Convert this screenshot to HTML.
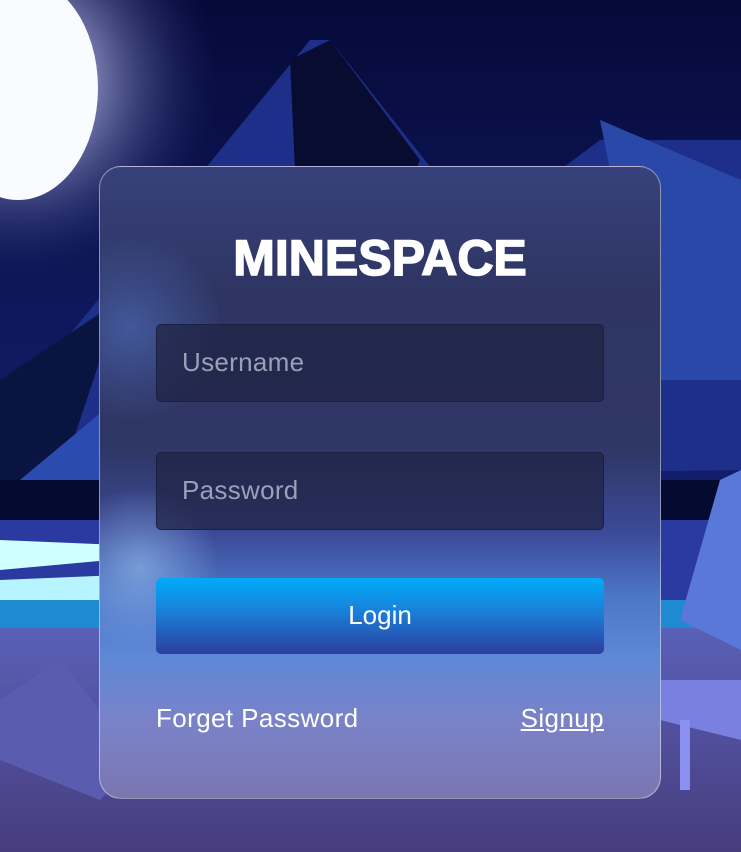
<!DOCTYPE html>
<html><head><meta charset="utf-8"><style>
html,body{margin:0;padding:0;width:741px;height:852px;overflow:hidden;font-family:"Liberation Sans",sans-serif}
#bg{position:absolute;left:0;top:0}
.card{position:absolute;left:99px;top:166px;width:560px;height:631px;border-radius:22px;border:1px solid rgba(255,255,255,0.45);
background:linear-gradient(180deg,#37417b 0%,#2e3563 20%,#2f3766 45%,#3c4a98 58%,#4d76c8 68%,#5f88d6 78%,#7a82c8 88%,#7a76b0 100%);overflow:hidden}
.glow{position:absolute;left:-40px;top:320px;width:160px;height:160px;border-radius:50%;background:radial-gradient(circle,rgba(140,180,230,0.7),rgba(140,180,230,0) 70%)}
.glow2{position:absolute;left:-60px;top:60px;width:180px;height:200px;border-radius:50%;background:radial-gradient(circle,rgba(80,110,190,0.6),rgba(80,110,190,0) 70%)}
h1{position:absolute;left:0;width:560px;top:62px;margin:0;text-align:center;color:#fff;font-size:50px;font-weight:900;-webkit-text-stroke:1.5px #fff}
.inp{position:absolute;left:56px;width:448px;height:78px;border-radius:5px;border:1px solid #1c2040;background:rgba(30,34,66,0.7);color:#9aa0b8;font-size:26px;letter-spacing:0.3px;line-height:74px;padding-left:25px;box-sizing:border-box}
.btn{position:absolute;left:56px;top:411px;width:448px;height:76px;border-radius:5px;background:linear-gradient(180deg,#00acfa 0%,#1a7fd8 45%,#2d3ea0 100%);color:#fff;font-size:26px;text-align:center;line-height:74px}
.lk{position:absolute;top:536px;color:#fff;font-size:26px;letter-spacing:0.4px}
</style></head><body>
<svg id="bg" width="741" height="852" viewBox="0 0 741 852">
<defs>
<linearGradient id="sky" x1="0" y1="0" x2="0" y2="1"><stop offset="0" stop-color="#060a3a"/><stop offset="0.6" stop-color="#14206e"/></linearGradient>
<radialGradient id="moonglow" cx="20" cy="80" r="200" gradientUnits="userSpaceOnUse"><stop offset="0.35" stop-color="#9aa0d0" stop-opacity="0.8"/><stop offset="1" stop-color="#1a2470" stop-opacity="0"/></radialGradient>
<linearGradient id="ground" x1="0" y1="0" x2="0" y2="1"><stop offset="0" stop-color="#5a60b8"/><stop offset="1" stop-color="#473c7c"/></linearGradient>
</defs>
<rect width="741" height="852" fill="url(#sky)"/>
<circle cx="20" cy="80" r="200" fill="url(#moonglow)"/>
<polygon points="0,420 310,40 330,40 480,230 600,140 741,140 741,470 0,480" fill="#1e2f8a"/>
<polygon points="290,60 330,40 420,160 360,300 300,280" fill="#070c30"/>
<polygon points="600,120 741,180 741,380 660,380 620,220" fill="#2a48a8"/>
<polygon points="0,380 120,300 60,480 0,480" fill="#0a1440"/>
<polygon points="20,480 200,330 260,480" fill="#2a4cb0"/>
<rect x="0" y="480" width="741" height="60" fill="#050a30"/>
<rect x="0" y="520" width="741" height="110" fill="#2a3aa0"/>
<polygon points="0,540 120,545 110,560 0,570" fill="#d0ffff"/>
<polygon points="0,580 120,575 110,600 0,610" fill="#b8f4ff"/>
<rect x="0" y="600" width="741" height="30" fill="#1e8ad0"/>
<rect x="0" y="628" width="741" height="224" fill="url(#ground)"/>
<polygon points="0,700 60,660 140,760 100,800 0,760" fill="#5a5cb0"/>
<polygon points="680,620 720,480 741,470 741,650" fill="#5a78d8"/>
<polygon points="660,680 741,680 741,740 660,720" fill="#7a80e0"/>
<rect x="680" y="720" width="10" height="70" fill="#8a90f0"/>
<ellipse cx="18" cy="88" rx="80" ry="112" fill="#fafbff"/>
</svg>
<div class="card">
<div class="glow2"></div><div class="glow"></div>
<h1>MINESPACE</h1>
<div class="inp" style="top:157px">Username</div>
<div class="inp" style="top:285px">Password</div>
<div class="btn">Login</div>
<div class="lk" style="left:56px">Forget Password</div>
<div class="lk" style="right:56px;text-decoration:underline">Signup</div>
</div>
</body></html>
